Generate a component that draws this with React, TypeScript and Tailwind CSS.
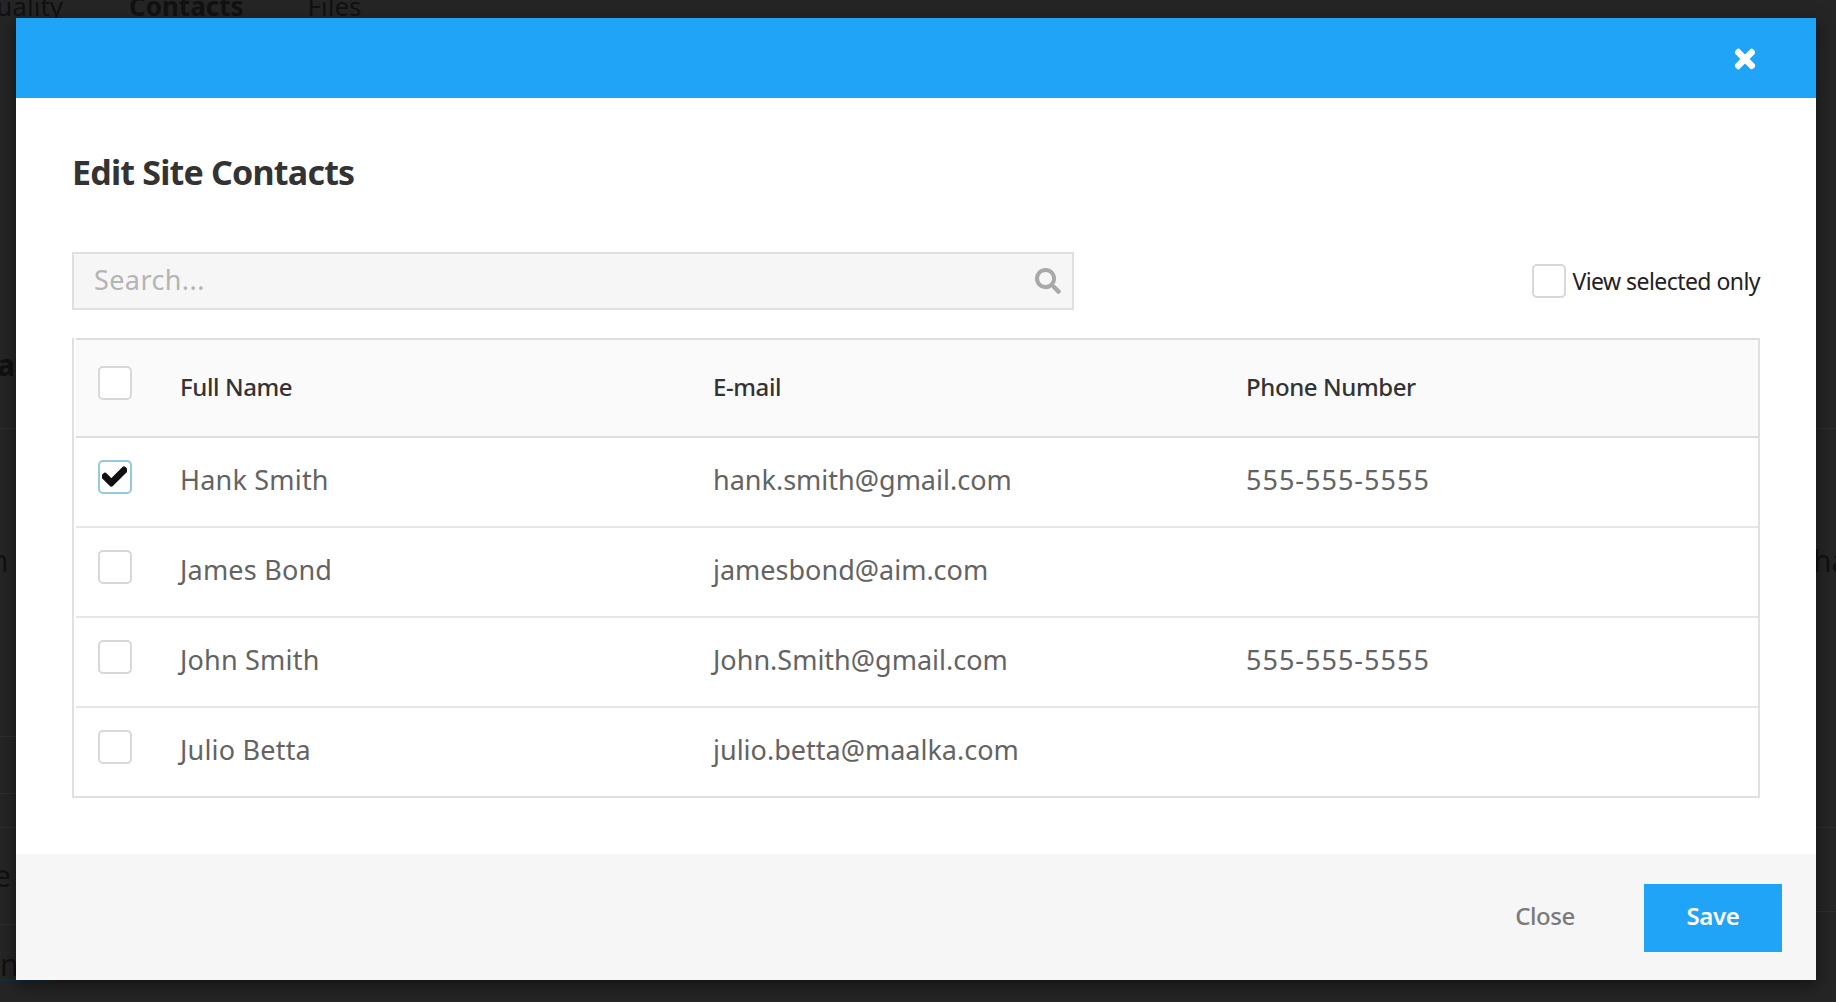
import { FaCheck, FaSearch, FaTimes } from 'react-icons/fa';

type Contact = {
  name: string;
  email: string;
  phone?: string;
  selected?: boolean;
};

const contacts: Contact[] = [
  { name: 'Hank Smith', email: 'hank.smith@gmail.com', phone: '555-555-5555', selected: true },
  { name: 'James Bond', email: 'jamesbond@aim.com' },
  { name: 'John Smith', email: 'John.Smith@gmail.com', phone: '555-555-5555' },
  { name: 'Julio Betta', email: 'julio.betta@maalka.com' },
];

function Checkbox({ checked = false }: { checked?: boolean }) {
  return (
    <div
      className={`relative h-[34px] w-[34px] shrink-0 rounded-[5px] border-2 bg-white ${
        checked ? 'border-[#94c9de]' : 'border-[#d8d8d8]'
      }`}
    >
      {checked && (
        <FaCheck
          stroke="currentColor"
          strokeWidth={36}
          className="absolute left-[2px] top-[2px] h-[25px] w-[25px] text-[#111111]"
        />
      )}
    </div>
  );
}

// the dimmed page that shows round the edges of the modal
function BackgroundPage() {
  const line = 'border-b border-[#2e2e2e]';

  return (
    <div className="h-screen overflow-hidden bg-[#252525] font-['Noto_Sans',sans-serif] text-[30px] leading-[40px] text-[#111111]">
      <div className="flex h-[18px] items-end gap-[64px] overflow-hidden text-[26px]">
        <span className="-ml-[24px] mr-[2px] shrink-0 translate-y-[8px]">Quality</span>
        <span className="shrink-0 translate-y-[8px] font-bold">Contacts</span>
        <span className="shrink-0 translate-y-[8px]">Files</span>
      </div>
      <div className="flex justify-between">
        <div className="w-4">
          <div className={`flex h-[411px] items-end pb-[43px] ${line}`}>
            <span className="-ml-[16px] font-bold">ta</span>
          </div>
          <div className={`h-[308px] pt-[112px] ${line}`}>
            <span className="-ml-[10px]">n</span>
          </div>
          <div className={`h-[57px] ${line}`} />
          <div className={`h-[34px] ${line}`} />
          <div className={`flex h-[97px] items-center ${line}`}>
            <span className="-ml-[6px]">e</span>
          </div>
          <div className="flex h-[56px] w-[52px] items-end border-b-2 border-[#102f44]">
            <span className="translate-y-[6px]">nn</span>
          </div>
        </div>
        <div className="w-5">
          <div className={`h-[411px] ${line}`} />
          <div className={`-ml-[3px] h-[399px] whitespace-nowrap pt-[112px] ${line}`}>ha</div>
          <div className={`h-[84px] ${line}`} />
        </div>
      </div>
    </div>
  );
}

export default function App() {
  const cols = 'grid grid-cols-[78px_533px_533px_1fr] items-center';

  return (
    <div className="relative h-screen overflow-hidden">
      <BackgroundPage />

      <div className="absolute inset-0 pl-4 pt-[18px] font-['Noto_Sans',sans-serif]">
        <div className="flex h-[962px] w-[1800px] flex-col bg-white shadow-[0_5px_15px_rgba(0,0,0,0.5)]">
          <div className="flex h-[80px] shrink-0 items-center justify-end bg-[#1fa4f8] pr-[61px] pt-[1px]">
            <FaTimes stroke="currentColor" strokeWidth={24} className="h-[28px] w-[20px] text-white" />
          </div>

          <div className="flex-1 pl-14 pr-14">
            <h2 className="mt-[50px] text-[34px] font-bold leading-[48px] tracking-[-0.8px] text-[#333333]">
              Edit Site Contacts
            </h2>

            <div className="mt-[56px] flex items-center justify-between">
              <div className="flex h-[58px] w-[1002px] items-center justify-between border-2 border-[#e0e0e0] bg-[#f6f6f6] pl-[20px] pr-[11px]">
                <span className="-translate-y-[1px] text-[27px] tracking-[0.4px] text-[#b4b4b4]">Search...</span>
                <FaSearch className="h-[26px] w-[26px] text-[#a9a9a9]" />
              </div>
              <div className="flex items-center gap-[6px]">
                <Checkbox />
                <span className="text-[23px] tracking-[-0.55px] text-[#222222]">View selected only</span>
              </div>
            </div>

            <div className="mt-[28px] border-2 border-t-0 border-[#e0e0e0] pl-[2px]">
              <div className={`${cols} h-[100px] border-y-2 border-[#dddddd] bg-[#fafafa] pb-[3px] text-[24px] font-medium tracking-[-0.4px] text-[#333333]`}>
                <div className="-translate-y-[4px] pl-[22px]">
                  <Checkbox />
                </div>
                <div className="pl-[26px]">Full Name</div>
                <div className="pl-[26px]">E-mail</div>
                <div className="pl-[26px]">Phone Number</div>
              </div>
              {contacts.map((c, i) => (
                <div
                  key={c.email}
                  className={`${cols} pb-[4px] text-[27px] text-[#636363] ${
                    i < contacts.length - 1 ? 'h-[90px] border-b-2 border-[#e6e6e6]' : 'h-[88px]'
                  }`}
                >
                  <div className="-translate-y-[3px] pl-[22px]">
                    <Checkbox checked={c.selected} />
                  </div>
                  <div className="pl-[26px] tracking-[0.2px]">{c.name}</div>
                  <div className="pl-[26px]">{c.email}</div>
                  <div className="pl-[26px] tracking-[1px]">{c.phone}</div>
                </div>
              ))}
            </div>
          </div>

          <div className="flex h-[126px] shrink-0 items-center justify-end bg-[#f6f6f6] pt-[2px] pr-[34px]">
            <span className="mr-[69px] -translate-y-[2px] text-[24px] font-medium tracking-[-0.4px] text-[#7b7b7b]">Close</span>
            <div className="flex h-[68px] w-[138px] items-center justify-center bg-[#1fa4f8] pb-[4px] text-[24px] font-semibold tracking-[-0.3px] text-white">
              Save
            </div>
          </div>
        </div>
      </div>
    </div>
  );
}
